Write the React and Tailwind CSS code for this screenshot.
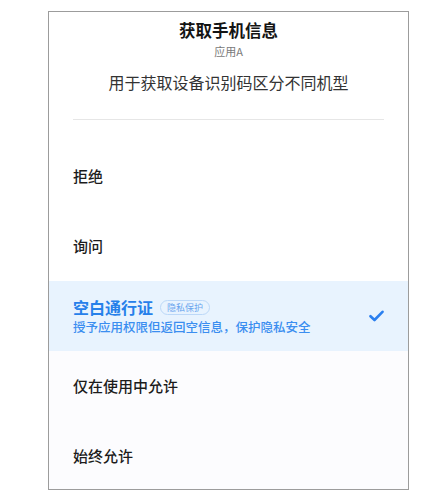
export default function App() {
  const font = { fontFamily: '"Noto Sans CJK SC", "Noto Sans", sans-serif' };
  return (
    <div className="w-[447px] h-[499px] bg-white" style={font}>
      <div className="ml-[48px] pt-[11px]">
        <div className="w-[361px] h-[479px] border border-[#9c9c9c] overflow-hidden bg-white">
          <div className="flex flex-col items-center">
            <div className="mt-[7px] h-[22px] leading-[22px] text-[16.5px] font-bold text-[#141414]">获取手机信息</div>
            <div className="mt-[2px] h-[16px] leading-[16px] text-[11px] text-[#7a7a7a]">应用A</div>
            <div className="mt-[11px] h-[24px] leading-[24px] text-[16px] text-[#333333]">用于获取设备识别码区分不同机型</div>
          </div>
          <div className="mt-[25px] mx-6 h-px bg-[#e6e6e6]" />
          <div className="mt-[21px] flex flex-col">
            <div className="h-[70px] shrink-0 px-6 flex items-center text-[15px] font-medium text-[#1c1c1c]">拒绝</div>
            <div className="h-[70px] shrink-0 px-6 flex items-center text-[15px] font-medium text-[#1c1c1c]">询问</div>
            <div className="h-[70px] shrink-0 pl-6 pr-6 flex items-center justify-between bg-[#e8f3fe]">
              <div className="flex flex-col">
                <div className="flex items-center h-[22px]">
                  <span className="text-[16px] font-bold text-[#2680ea] leading-[22px]">空白通行证</span>
                  <span className="ml-[7px] h-[15px] px-[6px] rounded-full border border-[#bcd8f8] text-[9px] leading-[13px] text-[#6aa5ee]">隐私保护</span>
                </div>
                <div className="text-[12.5px] font-medium text-[#3b8ef0] leading-[18px]">授予应用权限但返回空信息，保护隐私安全</div>
              </div>
              <svg width="15" height="12" viewBox="0 0 15 12">
                <path d="M1.5 6.2 L5.5 10 L13.5 1.8" fill="none" stroke="#2a7fef" strokeWidth="2.6" strokeLinecap="round" strokeLinejoin="round" />
              </svg>
            </div>
            <div className="h-[70px] shrink-0 px-6 flex items-center text-[15px] font-medium text-[#1c1c1c] bg-[#fcfcfe]">仅在使用中允许</div>
            <div className="h-[70px] shrink-0 px-6 flex items-center text-[15px] font-medium text-[#1c1c1c] bg-[#fcfcfe]">始终允许</div>
          </div>
        </div>
      </div>
    </div>
  );
}
